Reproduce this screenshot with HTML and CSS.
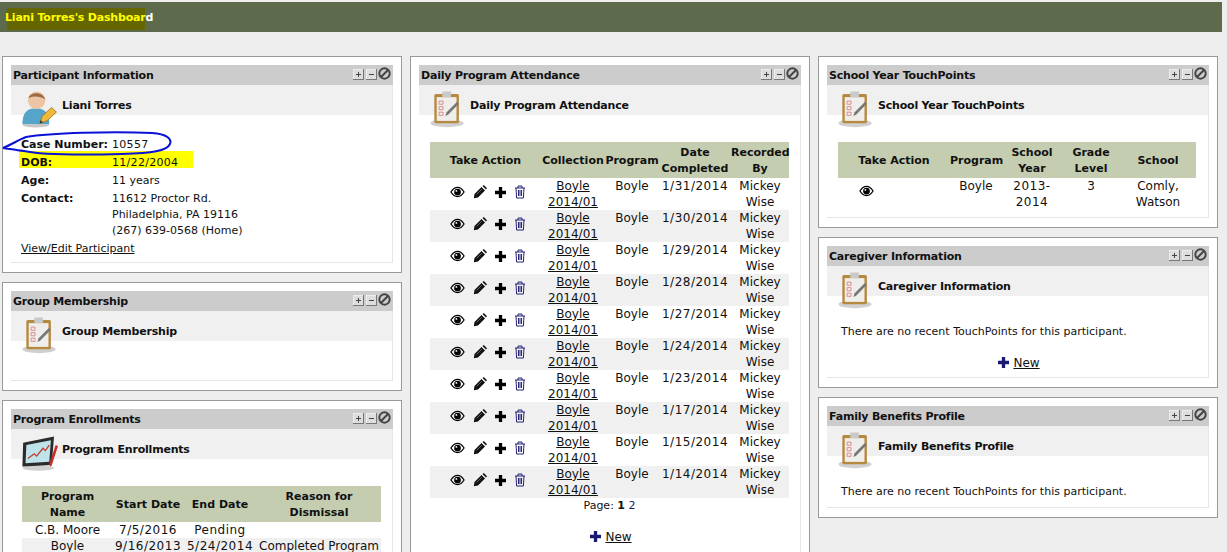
FILE: index.html
```html
<!DOCTYPE html>
<html lang="en">
<head>
  <meta charset="UTF-8">
  <meta name="viewport" content="width=device-width, initial-scale=1.0">
  <title>Liani Torres's Dashboard</title>
  <link rel="stylesheet" href="styles.css">
</head>
<body>
  <svg class="sprites" width="0" height="0">
    <symbol id="i-clip" viewBox="0 0 48 48">
      <ellipse cx="24" cy="42" rx="21" ry="5" fill="#aaa" opacity=".55"/>
      <rect x="8" y="5" width="31" height="37" rx="2" fill="#b5893f"/>
      <rect x="11" y="9" width="25" height="30" fill="#efeeea"/>
      <rect x="18" y="2" width="11" height="7" rx="1" fill="#c9c9c9"/>
      <path d="M14 14h5v4h-5zM14 21h5v4h-5zM14 28h5v4h-5z" fill="none" stroke="#d98a8a" stroke-width="1.2"/>
      <path d="M22 33l1.500-5 13-13 2.500 2.500-13 13z" fill="#777"/>
    </symbol>
    <symbol id="i-person" viewBox="0 0 48 48">
      <ellipse cx="20" cy="44" rx="17" ry="3.5" fill="#999" opacity=".55"/>
      <path d="M3 43c0-13 5-20 17-20s17 7 17 20z" fill="#55a5cb"/>
      <circle cx="21" cy="13" r="11" fill="#ecc6a4"/>
      <path d="M11 10c2-8 18-8 21 2-6-4-14-5-21-2z" fill="#9b6b45"/>
      <path d="M25 42l3-9 12-11 6 6-12 11z" fill="#f0b93a" stroke="#9a6c1c" stroke-width="1"/>
      <path d="M25 42l1-4 3 3z" fill="#333"/>
    </symbol>
    <symbol id="i-chart" viewBox="0 0 48 48">
      <ellipse cx="23" cy="43" rx="20" ry="3.5" fill="#aaa" opacity=".55"/>
      <path d="M4 11L43 3 40 39 3 41z" fill="#2b2b2b"/>
      <path d="M8 14L39 8 37 35 7 37z" fill="#bfe3ea"/>
      <path d="M10 31l8-6 3 3 8-10 3 3 5-7" fill="none" stroke="#c0392b" stroke-width="1.6"/>
      <path d="M38 41l2-1 8-25-3-1-8 24z" fill="#c8302a"/>
    </symbol>
    <symbol id="i-eye" viewBox="0 0 16 12">
      <path d="M1 6c4-6.500 10-6.500 14 0-4 6.500-10 6.500-14 0z" fill="none" stroke="#000" stroke-width="1.300"/>
      <circle cx="8" cy="6" r="3.600"/>
      <circle cx="6.800" cy="4.800" r="1" fill="#fff"/>
    </symbol>
    <symbol id="i-pen" viewBox="0 0 14 14">
      <path d="M.8 13.200l.7-4.200 7-7 3.500 3.500-7 7z" fill="#111"/>
      <path d="M9.500 1l1.300-1 3.200 3.200-1 1.300z" fill="#111"/>
      <path d="M3.500 9.500l5.500-5.500" stroke="#777" stroke-width=".8"/>
    </symbol>
    <symbol id="i-plus" viewBox="0 0 12 12">
      <path d="M4.200 0h3.600v4.200H12v3.600H7.800V12H4.200V7.800H0V4.200h4.200z"/>
    </symbol>
    <symbol id="i-trash" viewBox="0 0 12 14">
      <path d="M1 3h10M4 3V1h4v2M2 3l.6 10h6.800L10 3M4.500 5v6M6 5v6M7.500 5v6" fill="none" stroke="#23237a" stroke-width="1"/>
    </symbol>
    <symbol id="i-box-plus" viewBox="0 0 11 11">
      <rect x=".5" y=".5" width="10" height="10" fill="#ddd" stroke="#eee"/>
      <path d="M0 10.500h11M10.500 0v11" stroke="#777"/>
      <path d="M3 5.500h5M5.500 3v5" stroke="#444"/>
    </symbol>
    <symbol id="i-box-minus" viewBox="0 0 11 11">
      <rect x=".5" y=".5" width="10" height="10" fill="#ddd" stroke="#eee"/>
      <path d="M0 10.500h11M10.500 0v11" stroke="#777"/>
      <path d="M3 5.500h5" stroke="#444"/>
    </symbol>
    <symbol id="i-close" viewBox="0 0 12 12">
      <circle cx="6" cy="6" r="4.800" fill="none" stroke="#444" stroke-width="1.800"/>
      <path d="M2.800 9.200l6.400-6.400" stroke="#444" stroke-width="1.800"/>
    </symbol>
  </svg>

  <header class="page-bar">
    <h1 class="page-title"><span class="marked">Liani Torres's Dashboar</span>d</h1>
  </header>

  <main class="columns">
    <div class="column">
      <section class="panel">
        <div class="panel-title">
          <span>Participant Information</span>
          <span class="tools"><svg class="tool"><use href="#i-box-plus"/></svg><svg class="tool"><use href="#i-box-minus"/></svg><svg class="tool-close"><use href="#i-close"/></svg></span>
        </div>
        <div class="panel-body">
          <div class="sub-head"><svg class="sub-icon"><use href="#i-person"/></svg>Liani Torres</div>
          <dl class="facts">
            <dt>Case Number:</dt><dd class="date">10557</dd>
            <dt class="hl">DOB:</dt><dd class="hl date">11/22/2004</dd>
            <dt>Age:</dt><dd>11 years</dd>
            <dt>Contact:</dt><dd>11612 Proctor Rd.<br>Philadelphia, PA 19116<br>(267) 639-0568 (Home)</dd>
          </dl>
          <a class="edit-link" href="#">View/Edit Participant</a>
        </div>
      </section>

      <section class="panel panel-group">
        <div class="panel-title">
          <span>Group Membership</span>
          <span class="tools"><svg class="tool"><use href="#i-box-plus"/></svg><svg class="tool"><use href="#i-box-minus"/></svg><svg class="tool-close"><use href="#i-close"/></svg></span>
        </div>
        <div class="panel-body">
          <div class="sub-head"><svg class="sub-icon"><use href="#i-clip"/></svg>Group Membership</div>
        </div>
      </section>

      <section class="panel">
        <div class="panel-title">
          <span>Program Enrollments</span>
          <span class="tools"><svg class="tool"><use href="#i-box-plus"/></svg><svg class="tool"><use href="#i-box-minus"/></svg><svg class="tool-close"><use href="#i-close"/></svg></span>
        </div>
        <div class="panel-body">
          <div class="sub-head"><svg class="sub-icon"><use href="#i-chart"/></svg>Program Enrollments</div>
          <table class="grid grid-enroll">
            <colgroup><col class="w91"><col class="w70"><col class="w74"><col></colgroup>
            <tr><th>Program<br>Name</th><th>Start Date</th><th>End Date</th><th>Reason for<br>Dismissal</th></tr>
            <tr><td>C.B. Moore</td><td>7/5/2016</td><td>Pending</td><td></td></tr>
            <tr class="alt"><td>Boyle</td><td>9/16/2013</td><td>5/24/2014</td><td>Completed Program</td></tr>
          </table>
        </div>
      </section>
    </div>

    <div class="column">
      <section class="panel">
        <div class="panel-title">
          <span>Daily Program Attendance</span>
          <span class="tools"><svg class="tool"><use href="#i-box-plus"/></svg><svg class="tool"><use href="#i-box-minus"/></svg><svg class="tool-close"><use href="#i-close"/></svg></span>
        </div>
        <div class="panel-body">
          <div class="sub-head"><svg class="sub-icon"><use href="#i-clip"/></svg>Daily Program Attendance</div>
          <table class="grid grid-daily">
            <colgroup><col class="w111"><col class="w64"><col class="w54"><col class="w72"><col></colgroup>
            <tr><th>Take Action</th><th>Collection</th><th>Program</th><th>Date<br>Completed</th><th>Recorded<br>By</th></tr>
            <tr><td class="acts"><svg class="a-eye"><use href="#i-eye"/></svg><svg class="a-pen"><use href="#i-pen"/></svg><svg class="a-plus"><use href="#i-plus"/></svg><svg class="a-trash"><use href="#i-trash"/></svg></td><td><a href="#">Boyle 2014/01</a></td><td>Boyle</td><td>1/31/2014</td><td>Mickey Wise</td></tr>
            <tr class="alt"><td class="acts"><svg class="a-eye"><use href="#i-eye"/></svg><svg class="a-pen"><use href="#i-pen"/></svg><svg class="a-plus"><use href="#i-plus"/></svg><svg class="a-trash"><use href="#i-trash"/></svg></td><td><a href="#">Boyle 2014/01</a></td><td>Boyle</td><td>1/30/2014</td><td>Mickey Wise</td></tr>
            <tr><td class="acts"><svg class="a-eye"><use href="#i-eye"/></svg><svg class="a-pen"><use href="#i-pen"/></svg><svg class="a-plus"><use href="#i-plus"/></svg><svg class="a-trash"><use href="#i-trash"/></svg></td><td><a href="#">Boyle 2014/01</a></td><td>Boyle</td><td>1/29/2014</td><td>Mickey Wise</td></tr>
            <tr class="alt"><td class="acts"><svg class="a-eye"><use href="#i-eye"/></svg><svg class="a-pen"><use href="#i-pen"/></svg><svg class="a-plus"><use href="#i-plus"/></svg><svg class="a-trash"><use href="#i-trash"/></svg></td><td><a href="#">Boyle 2014/01</a></td><td>Boyle</td><td>1/28/2014</td><td>Mickey Wise</td></tr>
            <tr><td class="acts"><svg class="a-eye"><use href="#i-eye"/></svg><svg class="a-pen"><use href="#i-pen"/></svg><svg class="a-plus"><use href="#i-plus"/></svg><svg class="a-trash"><use href="#i-trash"/></svg></td><td><a href="#">Boyle 2014/01</a></td><td>Boyle</td><td>1/27/2014</td><td>Mickey Wise</td></tr>
            <tr class="alt"><td class="acts"><svg class="a-eye"><use href="#i-eye"/></svg><svg class="a-pen"><use href="#i-pen"/></svg><svg class="a-plus"><use href="#i-plus"/></svg><svg class="a-trash"><use href="#i-trash"/></svg></td><td><a href="#">Boyle 2014/01</a></td><td>Boyle</td><td>1/24/2014</td><td>Mickey Wise</td></tr>
            <tr><td class="acts"><svg class="a-eye"><use href="#i-eye"/></svg><svg class="a-pen"><use href="#i-pen"/></svg><svg class="a-plus"><use href="#i-plus"/></svg><svg class="a-trash"><use href="#i-trash"/></svg></td><td><a href="#">Boyle 2014/01</a></td><td>Boyle</td><td>1/23/2014</td><td>Mickey Wise</td></tr>
            <tr class="alt"><td class="acts"><svg class="a-eye"><use href="#i-eye"/></svg><svg class="a-pen"><use href="#i-pen"/></svg><svg class="a-plus"><use href="#i-plus"/></svg><svg class="a-trash"><use href="#i-trash"/></svg></td><td><a href="#">Boyle 2014/01</a></td><td>Boyle</td><td>1/17/2014</td><td>Mickey Wise</td></tr>
            <tr><td class="acts"><svg class="a-eye"><use href="#i-eye"/></svg><svg class="a-pen"><use href="#i-pen"/></svg><svg class="a-plus"><use href="#i-plus"/></svg><svg class="a-trash"><use href="#i-trash"/></svg></td><td><a href="#">Boyle 2014/01</a></td><td>Boyle</td><td>1/15/2014</td><td>Mickey Wise</td></tr>
            <tr class="alt"><td class="acts"><svg class="a-eye"><use href="#i-eye"/></svg><svg class="a-pen"><use href="#i-pen"/></svg><svg class="a-plus"><use href="#i-plus"/></svg><svg class="a-trash"><use href="#i-trash"/></svg></td><td><a href="#">Boyle 2014/01</a></td><td>Boyle</td><td>1/14/2014</td><td>Mickey Wise</td></tr>
          </table>
          <div class="pager">Page: <b>1</b> <span class="page-link">2</span></div>
          <div class="new-row"><svg class="new-plus"><use href="#i-plus"/></svg><a href="#">New</a></div>
        </div>
      </section>
    </div>

    <div class="column">
      <section class="panel">
        <div class="panel-title">
          <span>School Year TouchPoints</span>
          <span class="tools"><svg class="tool"><use href="#i-box-plus"/></svg><svg class="tool"><use href="#i-box-minus"/></svg><svg class="tool-close"><use href="#i-close"/></svg></span>
        </div>
        <div class="panel-body">
          <div class="sub-head"><svg class="sub-icon"><use href="#i-clip"/></svg>School Year TouchPoints</div>
          <table class="grid grid-school">
            <colgroup><col class="w112"><col class="w52"><col class="w60"><col class="w58"><col></colgroup>
            <tr><th>Take Action</th><th>Program</th><th>School<br>Year</th><th>Grade<br>Level</th><th>School</th></tr>
            <tr><td class="acts acts-one"><svg class="a-eye"><use href="#i-eye"/></svg></td><td>Boyle</td><td>2013-<br>2014</td><td>3</td><td>Comly,<br>Watson</td></tr>
          </table>
        </div>
      </section>

      <section class="panel">
        <div class="panel-title">
          <span>Caregiver Information</span>
          <span class="tools"><svg class="tool"><use href="#i-box-plus"/></svg><svg class="tool"><use href="#i-box-minus"/></svg><svg class="tool-close"><use href="#i-close"/></svg></span>
        </div>
        <div class="panel-body">
          <div class="sub-head"><svg class="sub-icon"><use href="#i-clip"/></svg>Caregiver Information</div>
          <p class="empty">There are no recent TouchPoints for this participant.</p>
          <div class="new-row new-care"><svg class="new-plus"><use href="#i-plus"/></svg><a href="#">New</a></div>
        </div>
      </section>

      <section class="panel">
        <div class="panel-title">
          <span>Family Benefits Profile</span>
          <span class="tools"><svg class="tool"><use href="#i-box-plus"/></svg><svg class="tool"><use href="#i-box-minus"/></svg><svg class="tool-close"><use href="#i-close"/></svg></span>
        </div>
        <div class="panel-body">
          <div class="sub-head"><svg class="sub-icon"><use href="#i-clip"/></svg>Family Benefits Profile</div>
          <p class="empty empty-last">There are no recent TouchPoints for this participant.</p>
        </div>
      </section>
    </div>
  </main>

  <!-- pen annotation drawn on top of the screenshot -->
  <svg class="scribble" width="172" height="26" viewBox="0 0 172 26">
    <path d="M1 17C9 14 16 9 24 6 48 2 110 0 150 2 165 3 170 8 168 13 165 20 150 22 120 23 80 24 40 24 22 20 14 19 8 18 1 17z" fill="none" stroke="#0b12d8" stroke-width="2"/>
  </svg>
</body>
</html>
```

FILE: styles.css
```css
html, body {
  height: 552px;
  overflow: hidden;
}

body {
  margin: 0;
  background: #eeeeee;
  color: #111;
  font-family: "DejaVu Sans", Verdana, sans-serif;
  font-size: 12px;
  line-height: 16px;
  position: relative;
}

a {
  color: #111;
}

.sprites {
  position: absolute;
}

.page-bar {
  margin: 2px 5px 0 0;
  height: 30px;
  background: #5d6b4c;
  padding: 8px 0 0 5px;
  box-sizing: border-box;
}

.page-title {
  margin: 0;
  font-size: 11px;
  line-height: 16px;
  font-weight: bold;
  color: #fff;
  letter-spacing: -.2px;
}

.marked {
  background: linear-gradient(#666600, #666600) no-repeat 2px 0;
  color: #ffff00;
  padding: 3px 0 6px;
}

.columns {
  display: grid;
  grid-template-columns: 400px 400px 400px;
  column-gap: 8px;
  margin: 24px 0 0 2px;
  align-items: start;
}

.column {
  display: flex;
  flex-direction: column;
  gap: 9px;
}

.panel {
  background: #fff;
  border: 1px solid #999;
  padding: 8px 8px 9px;
}

.panel-title {
  display: flex;
  justify-content: space-between;
  background: #ccc;
  height: 20px;
  line-height: 22px;
  padding-left: 2px;
  font-size: 11px;
  font-weight: bold;
  color: #111;
  letter-spacing: -.2px;
}

.tools {
  display: flex;
  align-items: flex-start;
  gap: 2px;
  padding: 2px 2px 0 0;
}

.tool {
  width: 11px;
  height: 11px;
  margin-top: 2px;
}

.tool-close {
  width: 13px;
  height: 13px;
  margin-left: -1px;
}

.panel-body {
  border: solid #e6e6e6;
  border-width: 0 1px 1px 0;
}

.panel-group .panel-body {
  height: 69px;
}

.sub-head {
  position: relative;
  height: 30px;
  line-height: 42px;
  background: #f0f0f0;
  padding-left: 51px;
  font-size: 11px;
  font-weight: bold;
  letter-spacing: -.2px;
}

.sub-icon {
  position: absolute;
  left: 9px;
  top: 5px;
  width: 38px;
  height: 38px;
}

.facts {
  display: grid;
  grid-template-columns: 91px 1fr;
  margin: 0;
  padding: 22px 0 0 10px;
  font-size: 11px;
  line-height: 16px;
  row-gap: 2px;
}

.facts dt {
  font-weight: bold;
}

.facts dd {
  margin: 0;
}

.facts .date {
  letter-spacing: .3px;
}

.facts .hl {
  background: linear-gradient(#ffff00, #ffff00) no-repeat;
  background-size: 100% 17px;
  margin-top: -4px;
  padding-top: 4px;
}

.facts dt.hl {
  margin-left: -2px;
  padding-left: 2px;
}

.facts dd.hl {
  margin-right: 199px;
}

.edit-link {
  display: block;
  padding: 2px 0 5px 10px;
  font-size: 11px;
  line-height: 16px;
}

.grid {
  border-collapse: collapse;
  table-layout: fixed;
  font-size: 12px;
  line-height: 16px;
  text-align: center;
  margin: 27px 0 0 11px;
}

.grid th {
  background: #c4cdb0;
  padding: 3px 0 1px;
  font-size: 11px;
  font-weight: bold;
}

.grid td {
  padding: 0;
  vertical-align: top;
}

.grid .alt td {
  background: #f0f0f0;
}

.grid-enroll,
.grid-daily {
  width: 359px;
}

.grid-school {
  width: 358px;
  margin-bottom: 7px;
}

.grid-enroll td:nth-child(2),
.grid-enroll td:nth-child(3),
.grid-daily td:nth-child(4),
.grid-school td:nth-child(3) {
  letter-spacing: .5px;
}

.w52 { width: 52px; }
.w54 { width: 54px; }
.w58 { width: 58px; }
.w60 { width: 60px; }
.w64 { width: 64px; }
.w70 { width: 70px; }
.w72 { width: 72px; }
.w74 { width: 74px; }
.w91 { width: 91px; }
.w111 { width: 111px; }
.w112 { width: 112px; }

.grid td.acts {
  white-space: nowrap;
  padding: 7px 0 0 5px;
  line-height: 0;
}

.grid td.acts-one {
  text-align: left;
  padding-left: 21px;
}

.acts svg {
  vertical-align: middle;
  margin: 0 4px;
}

.acts-one svg {
  margin: 0;
}

.a-eye {
  width: 15px;
  height: 12px;
}

.a-pen {
  width: 14px;
  height: 14px;
}

.a-plus {
  width: 11px;
  height: 11px;
}

.a-trash {
  width: 12px;
  height: 14px;
}

.pager {
  text-align: center;
  font-size: 11px;
}

.page-link {
  color: #1a1a6e;
}

.new-row {
  text-align: center;
  padding: 15px 0 20px 3px;
}

.new-plus {
  width: 11px;
  height: 11px;
  fill: #1a1a6e;
  margin-right: 4px;
  vertical-align: -1px;
}

.new-care {
  padding: 15px 0 6px 3px;
}

.empty {
  margin: 0;
  padding: 28px 0 0 14px;
  font-size: 11px;
}

.empty-last {
  padding-bottom: 7px;
}

.scribble {
  position: absolute;
  left: 2px;
  top: 131px;
}
```
